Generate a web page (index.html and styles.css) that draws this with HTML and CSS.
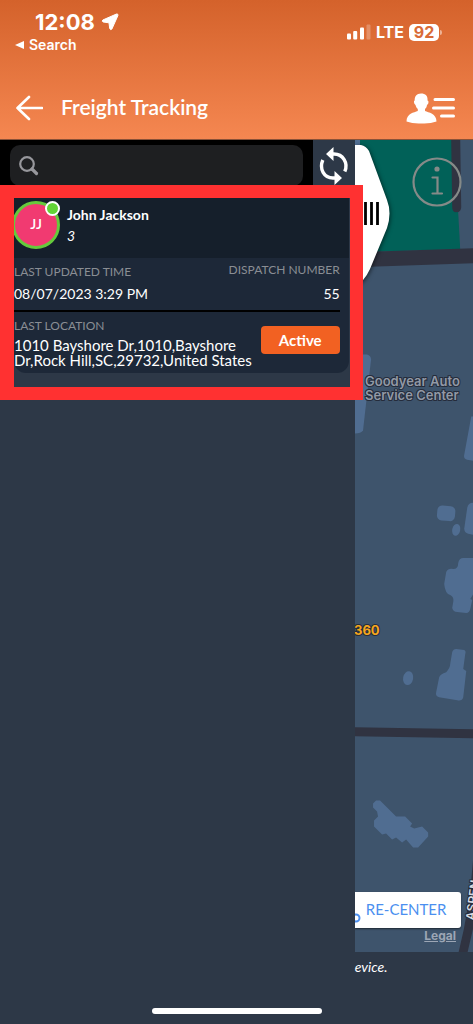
FILE: index.html
```html
<!DOCTYPE html>
<html lang="en">
<head>
    <meta charset="UTF-8">
    <meta name="viewport" content="width=device-width, initial-scale=1.0">
    <title>Freight Tracking</title>
    <link rel="stylesheet" href="styles.css">
</head>
<body>
    <header>
        <div class="status-bar">
            <div class="status-left">
                <div class="clock">
                    <span>12:08</span>
                    <svg width="18" height="18" viewBox="0 0 18 18"><path d="M15.500 1 L1.800 7 Q0.500 8.300 2.200 9 L8 9.800 L8.700 15.500 Q9.500 17.500 10.900 16 L16.900 2.600 Q17.300 0.500 15.500 1 Z" fill="#fff" stroke="#fff" stroke-width="1" stroke-linejoin="round"/></svg>
                </div>
                <a class="back-app" href="#">
                    <svg width="9" height="8" viewBox="0 0 9 8"><path d="M0 4 L9 0 V8 Z" fill="#fff"/></svg>
                    <span>Search</span>
                </a>
            </div>
            <div class="status-right">
                <svg width="24" height="16" viewBox="0 0 24 16" fill="#fff">
                    <rect x="0" y="9.500" width="4" height="6" rx="1"/>
                    <rect x="6.200" y="7" width="4" height="8.500" rx="1"/>
                    <rect x="13" y="3.500" width="4" height="12" rx="1"/>
                    <rect x="19.500" y="0.500" width="4" height="15" rx="1" opacity="0.25"/>
                </svg>
                <span class="network">LTE</span>
                <span class="battery">92</span>
            </div>
        </div>
        <div class="title-bar">
            <button class="icon-button" aria-label="Back">
                <svg width="28" height="26" viewBox="0 0 28 26" fill="none" stroke="#fff" stroke-width="2.600" stroke-linecap="round" stroke-linejoin="round"><path d="M27 13 H2.500 M14 2 L2.500 13 L14 24"/></svg>
            </button>
            <h1>Freight Tracking</h1>
            <button class="icon-button" aria-label="Contacts">
                <svg width="50" height="31" viewBox="0 0 50 31">
                    <path d="M16 0.500 C11.500 0.500 9.500 3.500 9.700 7.500 L9 8 C8.800 10 9.500 11.300 10.500 12 C11 14 11.800 15.200 12.800 16 V18 C9 19.500 1.500 20.500 1.500 28.500 Q8 31 16.500 30.500 Q25 31 31.500 28.500 C31.500 20.500 23.500 19.500 20 18 V16 C21 15 21.800 14 22 12 C23.200 11.300 23.800 10 23.300 8 L22.500 7.500 C23 3 20.500 0.500 16 0.500 Z" fill="#fff"/>
                    <path d="M30 6.500 H48.500 M28.500 15 H48.500 M36.500 23 H48.500" stroke="#fff" stroke-width="3" stroke-linecap="round"/>
                </svg>
            </button>
        </div>
    </header>
    <main>
        <aside>
            <div class="search-row">
                <label class="search-box">
                    <svg width="20" height="20" viewBox="0 0 20 20" fill="none" stroke="#97979c"><circle cx="8" cy="8" r="6.800" stroke-width="2.200"/><path d="M13 13 L17.500 17.500" stroke-width="3.200" stroke-linecap="round"/></svg>
                    <input type="search" aria-label="Search drivers">
                </label>
                <button class="refresh" aria-label="Refresh">
                    <svg width="32" height="38" viewBox="0 0 32 38" fill="none" stroke="#fff" stroke-width="3.400">
                        <path d="M14 7 H16 C25 7 30.500 16 26.800 24.500"/>
                        <path d="M18 31 H15 C6 31 1 22 4.800 13"/>
                        <path d="M15.500 0 V14 L8 7 Z M16.500 24 V38 L24 31 Z" fill="#fff" stroke="none"/>
                    </svg>
                </button>
            </div>
            <div class="list-item">
                <article class="card">
                    <div class="driver">
                        <div class="avatar">JJ<span class="online"></span></div>
                        <div>
                            <h2>John Jackson</h2>
                            <p class="unit">3</p>
                        </div>
                    </div>
                    <div class="details">
                        <div class="row">
                            <div class="updated">
                                <h3>LAST UPDATED TIME</h3>
                                <p>08/07/2023 3:29 PM</p>
                            </div>
                            <div class="dispatch">
                                <h3>DISPATCH NUMBER</h3>
                                <p>55</p>
                            </div>
                        </div>
                        <div class="row location">
                            <div>
                                <h3>LAST LOCATION</h3>
                                <p class="address">1010 Bayshore Dr,1010,Bayshore Dr,Rock Hill,SC,29732,United States</p>
                            </div>
                            <button class="active-button">Active</button>
                        </div>
                    </div>
                </article>
                <div class="highlight"></div>
            </div>
        </aside>
        <section class="map-column">
            <div class="map">
                <svg class="map-canvas" viewBox="0 0 118 812" preserveAspectRatio="xMinYMin slice">
                    <rect width="118" height="812" fill="#3e546c"/>
                    <path d="M5 0 H99 L105 109 L0 112 V0 Z" fill="#016158"/>
                    <path d="M0 0 H5 V5 H0 Z" fill="#526f93"/>
                    <path d="M96 0 L97 67 Q97 72 101 72 Q106 72 106 67 L105 0 Z" fill="#303341"/>
                    <path d="M0 112 L118 108 V123 L0 127 Z" fill="#303341"/>
                    <path d="M0 586 L118 588 V597 L0 595 Z" fill="#303341"/>
                    <path d="M118 715 Q115 765 103 812 H112 L118 786 Z" fill="#303341"/>
                    <g fill="#506d91">
                        <path d="M0 214 H12 Q16 215 16 219 L8 290 Q6 293 0 293 Z"/>
                        <path d="M118 276 H116 L109 314 Q108 318 112 319 L118 320 Z"/>
                        <rect x="82" y="365" width="18" height="15" rx="5" transform="rotate(5 91 372)"/>
                        <ellipse cx="101" cy="389" rx="4" ry="6" transform="rotate(12 101 389)"/>
                        <path d="M118 362 Q113 362 112 367 L109 388 Q109 392 113 393 L118 394 Z"/>
                        <path d="M118 417 H108 Q104 417 103 422 Q103 428 98 428 Q93 427 91 431 L89 443 Q90 453 95 454 Q99 456 98 461 L97 467 Q98 471 102 471 L111 472 Q114 472 115 468 L117 459 L115 458 L118 453 Z"/>
                        <path d="M101 508 L109 509 Q111 510 110 513 L108 528 L111 530 L108 556 Q107 560 102 559 L84 556 Q80 555 81 551 L84 536 Q85 533 91 531 Q95 527 95 523 L97 511 Q98 508 101 508 Z"/>
                        <ellipse cx="53" cy="537" rx="5" ry="7" transform="rotate(10 53 537)"/>
                        <path d="M21 659 H25 L41 675 H50 L57 682 L55 685 L59 687 L67 685 L73 691 V695 L63 706 H58 L51 698 L47 701 L41 696 L37 698 L31 692 L27 693 L19 685 V679 L23 675 L22 670 L18 666 V662 Z"/>
                    </g>
                    <g class="place-label">
                        <text x="10" y="245">Goodyear Auto</text>
                        <text x="10" y="259">Service Center</text>
                    </g>
                    <text class="road-number" x="-1" y="494">360</text>
                    <text class="street-label" transform="translate(119 779) rotate(-83)">ASPEN</text>
                </svg>
                <svg class="drawer-handle" width="40" height="150" viewBox="0 0 40 150">
                    <path d="M0 5 H6 Q11 6 14 11 L32 60 Q37 73 32 88 L15 129 Q9 142 0 146 Z" fill="#fff"/>
                    <path d="M10.500 62 V85 M16.500 62 V85 M22.500 62 V85" stroke="#000" stroke-width="2.800"/>
                </svg>
                <button class="info" aria-label="Map information">
                    <svg width="50" height="50" viewBox="0 0 50 50" fill="none" stroke="#858a88" stroke-width="2.200" stroke-linecap="round"><circle cx="25" cy="25" r="23.500"/><path d="M20.500 20.500 H25.500 V36.500 M20.500 36.500 H30"/><circle cx="25" cy="12" r="1.500" fill="#858a88"/></svg>
                </button>
                <div class="map-footer">
                    <button class="recenter">
                        <svg width="6" height="10" viewBox="0 0 6 10"><circle cx="1" cy="5" r="3.500" fill="none" stroke="#4b8ff0" stroke-width="2"/></svg>
                        <span>RE-CENTER</span>
                    </button>
                    <a class="legal" href="#">Legal</a>
                </div>
            </div>
            <p class="note">evice.</p>
        </section>
    </main>
    <div class="home-indicator"></div>
</body>
</html>
```

FILE: styles.css
```css
* {
    box-sizing: border-box;
}

body {
    font-family: Lato, sans-serif;
    background-color: #2d3847;
    color: white;
    margin: 0;
    display: flex;
    flex-direction: column;
    min-height: 100vh;
    overflow-x: hidden;
}

h1, h2, h3, p {
    margin: 0;
    font-weight: normal;
}

button {
    font-family: inherit;
    padding: 0;
    border: none;
    background: none;
    color: white;
    cursor: pointer;
}

svg {
    display: block;
    flex-shrink: 0;
}

header {
    background: linear-gradient(#d4622b, #f58751);
    border-bottom: 1px solid #8a5238;
    padding: 12px 18px 15px 15px;
}

.status-bar {
    display: flex;
    justify-content: space-between;
    font-family: Inter, sans-serif;
    font-weight: 600;
    padding-right: 16px;
}

.clock {
    display: flex;
    align-items: center;
    gap: 6px;
    padding-left: 20px;
    font-size: 22px;
    font-weight: 700;
    line-height: 20px;
}

.back-app {
    display: flex;
    align-items: center;
    gap: 5px;
    margin-top: 4px;
    color: white;
    font-size: 14px;
    line-height: 18px;
    text-decoration: none;
}

.status-right {
    display: flex;
    align-items: center;
    gap: 5px;
    height: 40px;
}

.network {
    font-size: 16px;
    font-weight: 700;
}

.battery {
    position: relative;
    width: 30px;
    border-radius: 5px;
    background-color: white;
    color: #d96b37;
    font-size: 16px;
    font-weight: 700;
    line-height: 17px;
    text-align: center;
}

.battery::after {
    content: "";
    position: absolute;
    right: -3px;
    top: 6px;
    width: 2px;
    height: 5px;
    border-radius: 0 2px 2px 0;
    background-color: #eeb294;
}

.title-bar {
    display: flex;
    align-items: center;
    gap: 18px;
    height: 32px;
    margin-top: 38px;
}

h1 {
    flex: 1;
    font-size: 21px;
    font-weight: 600;
    line-height: 24px;
    padding-bottom: 2px;
}

main {
    display: flex;
    flex: 1;
}

aside {
    flex: 0 0 75%;
    position: relative;
    z-index: 1;
}

.search-row {
    display: flex;
    height: 58px;
    background-color: black;
}

.search-box {
    flex: 1;
    display: flex;
    align-items: center;
    gap: 8px;
    height: 41px;
    margin: 5px 10px;
    padding: 0 9px;
    border-radius: 10px;
    background-color: #1e1f21;
}

.search-box input {
    flex: 1;
    min-width: 0;
    border: none;
    outline: none;
    background: none;
    color: white;
    font-family: inherit;
    font-size: 16px;
}

.refresh {
    display: flex;
    justify-content: center;
    width: 42px;
    padding-top: 7px;
    background-color: #2d3847;
}

.list-item {
    position: relative;
}

.card {
    margin: 0 6px 0 14px;
    border-radius: 0 0 12px 12px;
    background-color: #1d2838;
    overflow: hidden;
}

.driver {
    display: flex;
    gap: 7px;
    height: 60px;
    padding-top: 3px;
    background-color: #151f2b;
}

.avatar {
    position: relative;
    width: 48px;
    height: 48px;
    margin-left: -2px;
    border: 3px solid #65ca3c;
    border-radius: 50%;
    background-color: #f13a71;
    font-size: 14px;
    font-weight: 600;
    line-height: 40px;
    text-align: center;
}

.online {
    position: absolute;
    top: -3px;
    right: -3px;
    width: 15px;
    height: 15px;
    border: 2px solid white;
    border-radius: 50%;
    background-color: #62d436;
}

h2 {
    margin-top: 6px;
    font-size: 14px;
    font-weight: 700;
    line-height: 16px;
}

.unit {
    margin-top: 4px;
    font-size: 14px;
    font-style: italic;
    line-height: 18px;
}

.details {
    margin-right: 9px;
    padding-bottom: 5px;
}

.row {
    display: flex;
    justify-content: space-between;
}

h3 {
    color: #8a8e94;
    font-size: 12px;
    line-height: 16px;
}

.details p {
    font-size: 14px;
}

.updated, .dispatch {
    padding: 6px 0;
}

.updated p, .dispatch p {
    margin-top: 4px;
    line-height: 20px;
}

.dispatch {
    padding-top: 4px;
    text-align: right;
}

.dispatch p {
    margin-top: 6px;
}

.location {
    align-items: flex-start;
    padding-top: 6px;
    border-top: 2px solid black;
}

.details .address {
    max-width: 240px;
    margin-top: 4px;
    font-size: 15px;
    line-height: 15px;
}

.active-button {
    width: 79px;
    flex-shrink: 0;
    height: 28px;
    margin-top: 8px;
    border-radius: 4px;
    background-color: #f26122;
    font-size: 15px;
    font-weight: 700;
}

/* frame drawn over the selected driver */
.highlight {
    position: absolute;
    inset: -13px -8px -27px 0;
    border: 13px solid #ff3131;
    border-left-width: 14px;
    pointer-events: none;
}

.map-column {
    flex: 1;
    min-width: 0;
    display: flex;
    flex-direction: column;
}

.map {
    position: relative;
    flex: 1;
    display: flex;
    flex-direction: column;
    justify-content: flex-end;
    overflow: hidden;
}

.map-canvas {
    position: absolute;
    inset: 0;
    width: 100%;
    height: 100%;
}

.map-canvas text {
    paint-order: stroke;
    stroke: #252c3b;
    stroke-width: 2px;
    font-family: Inter, sans-serif;
    font-weight: 600;
}

.place-label text {
    fill: #9299a6;
    font-size: 13px;
}

.map-canvas .road-number {
    fill: #f5a61d;
    font-size: 13px;
    font-weight: 700;
}

.map-canvas .street-label {
    fill: #d4dae2;
    font-size: 12px;
}

.drawer-handle {
    position: absolute;
    top: 0;
    left: 0;
    filter: drop-shadow(1px 1px 2px #0008);
}

.info {
    position: absolute;
    top: 17px;
    right: 11px;
}

.map-footer {
    position: relative;
    display: flex;
    flex-direction: column;
    align-items: flex-end;
    padding: 0 12px 9px 0;
}

.recenter {
    display: flex;
    align-items: center;
    gap: 5px;
    width: 100%;
    height: 36px;
    padding-bottom: 3px;
    border-radius: 0 3px 3px 0;
    background-color: white;
    box-shadow: 0 1px 2px #0008;
    color: #4b8ff0;
    font-size: 15px;
}

.recenter svg {
    align-self: flex-end;
    margin-bottom: 2px;
}

.legal {
    margin-right: 5px;
    color: #9ca6b5;
    font-family: Inter, sans-serif;
    font-size: 12px;
    font-weight: 700;
    line-height: 15px;
}

.note {
    height: 72px;
    padding-top: 6px;
    font-size: 14px;
    font-style: italic;
    line-height: 18px;
}

.home-indicator {
    position: fixed;
    bottom: 10px;
    left: 50%;
    z-index: 2;
    width: 170px;
    height: 6px;
    margin-left: -85px;
    border-radius: 3px;
    background-color: white;
}
```
